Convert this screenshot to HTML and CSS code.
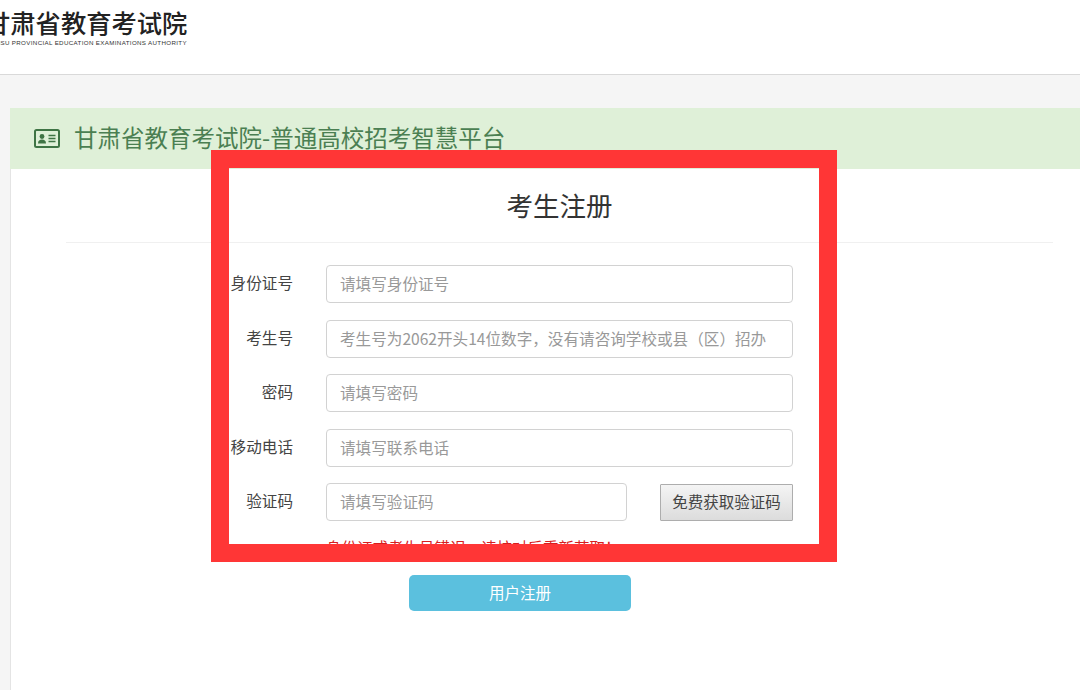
FILE: index.html
```html
<!DOCTYPE html>
<html lang="zh-CN">
<head>
<meta charset="utf-8">
<title>考生注册</title>
<link rel="stylesheet" href="styles.css">
</head>
<body>
<header class="site-header">
  <div class="logo">
    <div class="logo-cn">甘肃省教育考试院</div>
    <div class="logo-en">GANSU PROVINCIAL EDUCATION EXAMINATIONS AUTHORITY</div>
  </div>
</header>
<main class="page">
  <section class="panel">
    <div class="panel-heading">
      <svg class="card-icon" viewBox="0 0 26 19" width="26" height="19" aria-hidden="true">
        <rect x="1" y="1" width="24" height="17" rx="1.5" fill="none" stroke="#3f7445" stroke-width="2"/>
        <circle cx="8" cy="7.5" r="2.4" fill="#3f7445"/>
        <path d="M4 14.5c0-3 1.8-4 4-4s4 1 4 4z" fill="#3f7445"/>
        <path d="M14.5 6.5h7M14.5 9.5h7M14.5 12.5h7" stroke="#3f7445" stroke-width="1.3" fill="none"/>
      </svg>
      <h1 class="panel-title">甘肃省教育考试院-普通高校招考智慧平台</h1>
    </div>
    <div class="panel-body">
      <h2 class="form-title">考生注册</h2>
      <form class="form">
        <div class="row">
          <label class="label">身份证号</label>
          <input class="field" type="text" placeholder="请填写身份证号">
        </div>
        <div class="row">
          <label class="label">考生号</label>
          <input class="field" type="text" placeholder="考生号为2062开头14位数字，没有请咨询学校或县（区）招办">
        </div>
        <div class="row">
          <label class="label">密码</label>
          <input class="field" type="text" placeholder="请填写密码">
        </div>
        <div class="row">
          <label class="label">移动电话</label>
          <input class="field" type="text" placeholder="请填写联系电话">
        </div>
        <div class="row">
          <label class="label">验证码</label>
          <div class="code-group">
            <input class="field code-field" type="text" placeholder="请填写验证码">
            <button class="code-btn" type="button">免费获取验证码</button>
          </div>
        </div>
        <p class="error">身份证或考生号错误，请核对后重新获取！</p>
        <button class="submit" type="button">用户注册</button>
      </form>
    </div>
  </section>
</main>
<div class="red-frame"></div>
</body>
</html>
```

FILE: styles.css
```css
* { box-sizing: border-box; }
html, body { margin: 0; height: 100%; overflow: hidden; }
body {
  background: #f5f5f5;
  font-family: "Noto Sans CJK SC", "Liberation Sans", sans-serif;
  color: #333;
}
.site-header {
  height: 75px;
  background: #fff;
  border-bottom: 1px solid #d9d9d9;
  padding-top: 9px;
  overflow: hidden;
}
.logo { margin-left: -15px; }
.logo-cn {
  font-size: 25.3px;
  line-height: 26px;
  font-weight: 500;
  color: #222;
  white-space: nowrap;
}
.logo-en {
  margin-top: 4px;
  margin-left: 1px;
  font-family: "Liberation Sans", sans-serif;
  font-size: 6.2px;
  line-height: 7px;
  letter-spacing: 0.35px;
  color: #333;
  white-space: nowrap;
}
.page { padding: 33px 0 0 10px; }
.panel {
  background: #fff;
  border-left: 1px solid #e4e4e4;
  height: 600px;
}
.panel-heading {
  height: 61px;
  margin-left: -1px;
  background: #dff0d8;
  display: flex;
  align-items: center;
  gap: 14px;
  padding-left: 24px;
}
.card-icon { flex: none; }
.panel-title {
  margin: 0 0 4px;
  font-size: 23.5px;
  line-height: 32px;
  font-weight: 400;
  color: #4b7f52;
  white-space: nowrap;
}
.panel-body { padding: 0 27px 0 55px; }
.form-title {
  margin: 0;
  height: 74px;
  border-bottom: 1px solid #f0f0f0;
  font-size: 26.5px;
  line-height: 72px;
  font-weight: 400;
  text-align: center;
  color: #333;
}
.form { padding-top: 22px; }
.row {
  display: grid;
  grid-template-columns: 227px 467px;
  column-gap: 33px;
  align-items: center;
  height: 38px;
  margin-bottom: 16.5px;
}
.label {
  text-align: right;
  font-size: 15.6px;
  line-height: 38px;
  color: #444;
  white-space: nowrap;
  position: relative;
  top: -2px;
}
.field {
  width: 100%;
  height: 38px;
  padding: 0 25px 2px 13px;
  border: 1px solid #d2d2d2;
  border-radius: 4px;
  background: #fff;
  font-family: inherit;
  font-size: 15.6px;
  color: #555;
  outline: none;
}
.field::placeholder { color: #999; opacity: 1; }
.code-group {
  display: flex;
  justify-content: space-between;
  align-items: center;
}
.code-field { width: 301px; }
.code-btn {
  width: 133px;
  height: 37px;
  padding: 0 0 2px;
  border: 1px solid #adadad;
  border-radius: 1px;
  background: linear-gradient(#f4f4f4, #dcdcdc);
  font-family: inherit;
  font-size: 15.5px;
  color: #444;
}
.error {
  margin: -1px 0 0 260px;
  height: 38px;
  font-size: 15.5px;
  line-height: 20px;
  color: #d81e1e;
  white-space: nowrap;
}
.submit {
  display: block;
  width: 222px;
  height: 36px;
  margin-left: 343px;
  padding: 0 0 2px;
  border: 0;
  border-radius: 5px;
  background: #5bc0de;
  font-family: inherit;
  font-size: 15.5px;
  color: #fff;
}
.red-frame {
  position: absolute;
  left: 211px;
  top: 150px;
  width: 626px;
  height: 412px;
  border: 18.5px solid #ff3636;
  pointer-events: none;
}
```
